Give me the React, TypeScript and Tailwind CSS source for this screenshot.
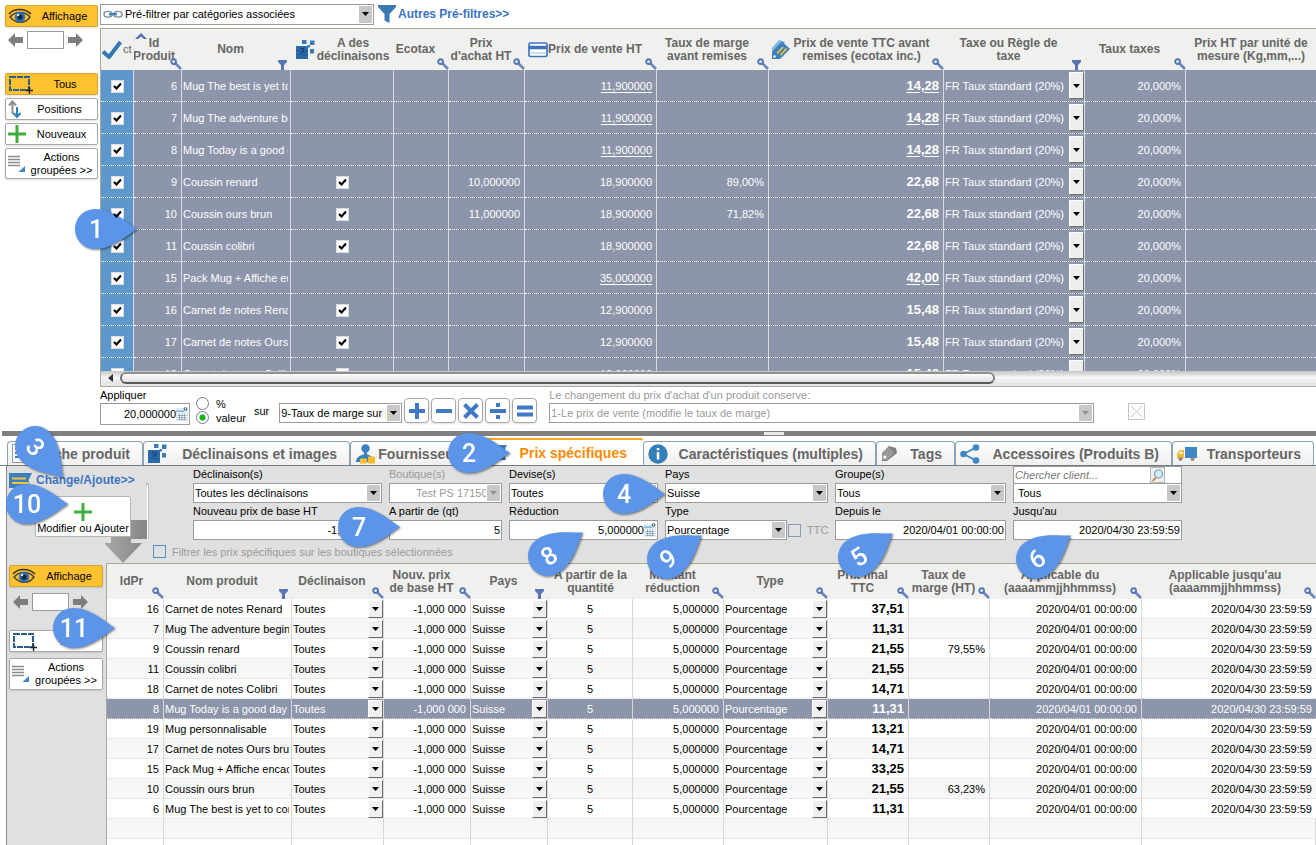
import type { ReactNode } from "react";

/* ---------- icons ---------- */

const EyeIcon = () => (
  <svg width="24" height="17" viewBox="0 0 24 17" fill="none" className="shrink-0">
    <path d="M1 6C6 0 17 0 23 6" stroke="#333" strokeWidth="1.6" />
    <path d="M2 9C7 3 17 3 22 9C17 16 8 16 2 9Z" stroke="#444" strokeWidth="1.4" />
    <circle cx="12" cy="9" r="5.2" fill="#2f6fae" />
    <circle cx="12" cy="9" r="2.6" fill="#10243c" />
    <circle cx="10" cy="7" r="1.3" fill="#cfe2f5" />
  </svg>
);

const ArrowIcon = ({ flip = false }: { flip?: boolean }) => (
  <svg width="15" height="14" viewBox="0 0 15 14" className="shrink-0">
    <path d={flip ? "M15 7L8 0V4H0V10H8V14Z" : "M0 7L7 0V4H15V10H7V14Z"} fill="#7d7d7d" />
  </svg>
);

const SelectionIcon = () => (
  <svg width="25" height="20" viewBox="0 0 25 20" fill="none" className="shrink-0">
    <rect x="2" y="3" width="19" height="13" stroke="#2b5f8a" strokeWidth="2" strokeDasharray="6 1" />
    <path d="M21.5 13V20M18 16.500H25" stroke="#222" strokeWidth="1.4" />
  </svg>
);

const PositionsIcon = () => (
  <svg width="14" height="19" viewBox="0 0 14 19" fill="none" className="shrink-0">
    <path d="M4.500 14V2M1 5.500L4.500 1.500L8 5.500" stroke="#8d8d8d" strokeWidth="2" />
    <path d="M9 7V17M5.500 13L9 17L12.500 13" stroke="#2f7fc1" strokeWidth="2" />
  </svg>
);

const PlusIcon = () => (
  <svg width="18" height="18" viewBox="0 0 18 18" className="shrink-0">
    <path d="M7.500 0H10.500V7.500H18V10.500H10.500V18H7.500V10.500H0V7.500H7.500Z" fill="#3eae3a" />
  </svg>
);

const ListIcon = () => (
  <svg width="18" height="18" viewBox="0 0 18 18" className="shrink-0">
    <path d="M0 1.500H12M0 4.500H12M0 7.500H12M0 10.500H12" stroke="#8d8d8d" strokeWidth="1.3" />
    <path d="M17 11V17H10.500Z" fill="#3c86c6" />
  </svg>
);

const LinkIcon = () => (
  <svg width="20" height="10" viewBox="0 0 20 10" fill="none" className="shrink-0">
    <rect x="1" y="2.500" width="8" height="5.500" rx="2.700" stroke="#8e9aa5" strokeWidth="1.700" />
    <rect x="11" y="2.500" width="8" height="5.500" rx="2.700" stroke="#8e9aa5" strokeWidth="1.700" />
    <path d="M6 5.200H14" stroke="#3a7fc0" strokeWidth="2.200" />
  </svg>
);

const Funnel = ({ size }: { size: number }) => (
  <svg width={size} height={size} viewBox="0 0 18 18" className="shrink-0">
    <path d="M0 0H18V2L11.500 9V18L6.500 15.500V9L0 2Z" fill="#3c78b4" />
  </svg>
);

const SmallFunnel = () => (
  <svg width="9" height="10" viewBox="0 0 9 10">
    <path d="M0 0H9V2L6 5V10H3V5L0 2Z" fill="#5676b4" />
  </svg>
);

const KeyIcon = () => (
  <svg width="12" height="12" viewBox="0 0 12 12" fill="none">
    <path d="M4.500 4.500L11 11" stroke="#6d87bd" strokeWidth="2.600" />
    <circle cx="3.600" cy="3.600" r="2.400" stroke="#5676b4" strokeWidth="1.900" fill="#e6ecf7" />
  </svg>
);

const BigCheck = () => (
  <svg width="22" height="20" viewBox="0 0 22 20" fill="none" className="shrink-0">
    <path d="M2 11.500L8 17L19.500 2" stroke="#3379b5" strokeWidth="4" strokeLinejoin="round" />
  </svg>
);

const Cubes = () => (
  <svg width="19" height="21" viewBox="0 0 19 21" className="shrink-0">
    <path d="M0 7H12V20H0Z" fill="#2c6cab" />
    <path d="M0 11.500H12M0 15.800H12M4 7V20M8 7V20" stroke="#1f5891" strokeWidth=".7" />
    <path d="M4 9.500H7.500V12.500H6V14.500" stroke="#173f6e" strokeWidth="1.100" fill="none" />
    <path d="M6 1H10.500V5H6ZM14 1.500H18.500V6H14ZM14 10H18V14.500H14ZM11.500 6H14V8.500H11.500Z" fill="#3b7ab8" />
  </svg>
);

const CardIcon = () => (
  <svg width="20" height="16" viewBox="0 0 20 16" fill="none" className="shrink-0">
    <rect x="1" y="1" width="18" height="13.500" rx="1.500" stroke="#3f73c0" strokeWidth="1.700" fill="#fff" />
    <path d="M1 5.500H19" stroke="#3f73c0" strokeWidth="3.500" />
    <path d="M1 11H19" stroke="#9cb8e2" strokeWidth="1" />
  </svg>
);

const PriceTagIcon = () => (
  <svg width="20" height="21" viewBox="0 0 20 21" className="shrink-0">
    <path d="M1 9L8 1L14 3L4 16H1Z" fill="#7db2dc" />
    <path d="M1 13L11 2.500L19 10L9 20H1Z" fill="#3b7fbd" />
    <path d="M6 14.500L12 8M9.500 16L15.500 9.500" stroke="#f5c33b" strokeWidth="1.800" />
    <circle cx="3.500" cy="17.500" r="1.200" fill="#fff" />
  </svg>
);

const SheetIcon = () => (
  <svg width="18" height="20" viewBox="0 0 18 20" className="shrink-0">
    <rect x=".5" y=".5" width="16" height="18" fill="#fff" stroke="#9a9a9a" />
    <path d="M3 5H14M3 9H14M3 13H14" stroke="#3f86c4" strokeWidth="2" />
  </svg>
);

const SupplierIcon = () => (
  <svg width="21" height="20" viewBox="0 0 21 20" className="shrink-0">
    <circle cx="10.500" cy="4.500" r="4.200" fill="#3b80bf" />
    <path d="M9 8H12V11H9Z" fill="#3b80bf" />
    <path d="M1 18C1 14 4 12 8 10.500H13C16 12 17 13 17 15V18Z" fill="#3b80bf" />
    <path d="M5 14.500H12V19.500H5ZM13 12.500H20V19.500H13Z" fill="#f2bd2e" />
  </svg>
);

const RibbonIcon = () => (
  <svg width="23" height="15" viewBox="0 0 23 15" className="shrink-0">
    <path d="M0 0H23L19.500 7L22 15H0Z" fill="#3b7fbd" />
    <path d="M3 5.500H17M3 10H20" stroke="#f5c33b" strokeWidth="2" />
  </svg>
);

const InfoIcon = () => (
  <svg width="20" height="20" viewBox="0 0 20 20" className="shrink-0">
    <circle cx="10" cy="10" r="9.700" fill="#357fb9" />
    <path d="M8.800 4H11.300V6.300H8.800ZM8.800 8H11.300V15.500H8.800Z" fill="#fff" />
  </svg>
);

const TagIcon = () => (
  <svg width="17" height="17" viewBox="0 0 17 17" className="shrink-0">
    <path d="M1 8L8 1L15 3L16 8L6 16H1Z" fill="#808080" />
    <path d="M1 9L8 2L13 8L6 15H1Z" fill="#9a9a9a" />
    <circle cx="3.800" cy="12" r="1.500" fill="#fff" />
  </svg>
);

const ShareIcon = () => (
  <svg width="20" height="20" viewBox="0 0 20 20" className="shrink-0">
    <path d="M16 3.500L3.500 10L16 16.500" stroke="#3f86c4" strokeWidth="1.800" fill="none" />
    <circle cx="16" cy="3.500" r="3.300" fill="#3f86c4" />
    <circle cx="3.500" cy="10" r="3.300" fill="#3f86c4" />
    <circle cx="16" cy="16.500" r="3.300" fill="#3f86c4" />
  </svg>
);

const TruckIcon = () => (
  <svg width="20" height="16" viewBox="0 0 20 16" className="shrink-0">
    <rect x="8" y="1" width="12" height="11" fill="#3f86c4" />
    <path d="M2.500 4H7V12.500H0V8Z" fill="#f2b93a" />
    <path d="M3 5.500H5.500V8H2Z" fill="#fff3cf" />
    <circle cx="3.500" cy="13" r="2" fill="#8a8a8a" />
    <circle cx="15.500" cy="13" r="2" fill="#8a8a8a" />
  </svg>
);

const CalcIcon = () => (
  <svg width="12" height="14" viewBox="0 0 12 14" className="shrink-0">
    <path d="M0 1H12V14H0Z" fill="#d9ecf8" />
    <path d="M0 3.500H8V5H0Z" fill="#7fb4d8" />
    <path d="M1.500 6.500H10.500V12.500H1.500Z" fill="#fff" />
    <path d="M1.500 8.500H10.500M1.500 10.500H10.500M1.500 12.500H10.500M3.500 6.500V12.500M6 6.500V12.500M8.500 6.500V12.500" stroke="#8a9aa6" strokeWidth=".8" />
    <circle cx="9.500" cy="2" r="1.400" fill="none" stroke="#333" strokeWidth=".8" />
  </svg>
);

const Triangle = ({ muted = false }: { muted?: boolean }) => (
  <svg width="7" height="4" viewBox="0 0 7 4">
    <path d="M0 0H7L3.500 4Z" fill={muted ? "#8e8e8e" : "#000"} />
  </svg>
);

/* ---------- controls ---------- */

function CheckBox({ label, off = false }: { label: string; off?: boolean }) {
  return (
    <span className="inline-grid size-[13px] align-middle">
      <input
        type="checkbox"
        aria-label={label}
        defaultChecked={!off}
        className="peer [grid-area:1/1] size-[13px] appearance-none border border-[#dcdcdc] bg-white"
      />
      <svg viewBox="0 0 13 13" className="pointer-events-none invisible z-[1] [grid-area:1/1] peer-checked:visible">
        <path d="M3 6L5.500 8.500L10 3.500" stroke="#000" strokeWidth="2.200" fill="none" />
      </svg>
    </span>
  );
}

type BoxProps = {
  id?: string;
  label?: string;
  value: string;
  className?: string;
  muted?: boolean;
  pad?: string;
};

function SelectBox({ id, label, value, className = "h-5 border", muted = false, pad = "pl-1" }: BoxProps) {
  return (
    <span className={`grid border-[#9b9b9b] bg-white ${className}`}>
      <select
        id={id}
        aria-label={label}
        disabled={muted}
        className={`w-full min-w-0 appearance-none overflow-hidden pr-[15px] opacity-100 outline-none [grid-area:1/1] ${pad} ${muted ? "text-[#9a9a9a]" : "text-black"}`}
      >
        <option>{value}</option>
      </select>
      <span className="pointer-events-none m-px flex w-[13px] items-center justify-center justify-self-end bg-[#c8c8c8] [grid-area:1/1]">
        <Triangle muted={muted} />
      </span>
    </span>
  );
}

function CellSelect({ label, value, tall = false }: { label: string; value: string; tall?: boolean }) {
  return (
    <span className="grid h-full">
      <select
        aria-label={label}
        className={`w-full min-w-0 appearance-none overflow-hidden bg-transparent pr-4 pl-px outline-none [grid-area:1/1] ${tall ? "pt-0.5" : ""}`}
      >
        <option className="text-black">{value}</option>
      </select>
      <span
        className={`pointer-events-none flex w-[15px] items-center justify-center justify-self-end border border-t-white border-r-[#6c6c6c] border-b-[#6c6c6c] border-l-white bg-[#efefef] [grid-area:1/1] ${tall ? "mt-0.5" : "mt-px"}`}
      >
        <Triangle />
      </span>
    </span>
  );
}

function TextBox({ id, label, value, className = "h-5", icon }: BoxProps & { icon?: ReactNode }) {
  return (
    <span className={`flex items-center border border-[#9b9b9b] bg-white pr-px ${className}`}>
      <input id={id} aria-label={label} defaultValue={value} className="w-full min-w-0 text-right outline-none" />
      {icon}
    </span>
  );
}

function SideButton({ icon, children, active = false, className = "h-[22px]" }: { icon: ReactNode; children: ReactNode; active?: boolean; className?: string }) {
  return (
    <button
      type="button"
      className={`flex w-full items-center rounded-xs border pl-0.5 shadow-sm ${className} ${active ? "border-[#d9a436] bg-[#ffc12e]" : "border-[#a8a8a8] bg-white"}`}
    >
      {icon}
      <span className="flex-1 text-center leading-[13px]">{children}</span>
    </button>
  );
}

function Pager({ label }: { label: string }) {
  return (
    <div className="flex h-[18px] items-center justify-center gap-1 pr-3">
      <button type="button" aria-label="Précédent">
        <ArrowIcon />
      </button>
      <input aria-label={label} className="h-[18px] w-[37px] border border-[#9b9b9b] bg-white" />
      <button type="button" aria-label="Suivant">
        <ArrowIcon flip />
      </button>
    </div>
  );
}

type Head = { text: ReactNode; name: string; w?: string; icon?: ReactNode; corner?: "key" | "filter"; pad?: string };

function HeadRow({ cols, className }: { cols: Head[]; className: string }) {
  return (
    <thead>
      <tr className={`bg-[#f0f0ee] ${className}`}>
        {cols.map((c) => (
          <th key={c.name} scope="col" className="relative overflow-hidden p-0 text-xs leading-[13px] font-bold whitespace-nowrap text-[#666]">
            <div className={`flex items-center ${c.pad ?? "justify-center"}`}>
              {c.icon}
              <span>{c.text}</span>
            </div>
            {c.corner === "key" && (
              <span className="absolute right-0 bottom-0">
                <KeyIcon />
              </span>
            )}
            {c.corner === "filter" && (
              <span className="absolute right-1 bottom-0">
                <SmallFunnel />
              </span>
            )}
          </th>
        ))}
      </tr>
    </thead>
  );
}

/* ---------- products grid ---------- */

const productCols: Head[] = [
  { name: "act", w: "w-[33px]", text: "ct", icon: <BigCheck />, pad: "justify-start font-normal text-[11px]" },
  {
    name: "id",
    w: "w-[48px]",
    corner: "key",
    text: (
      <>
        <svg width="12" height="6" viewBox="0 0 12 6" className="absolute top-1 left-px">
          <path d="M0 6L6 0L12 6L9 6L6 3.500L3 6Z" fill="#4e6fb0" />
        </svg>
        Id
        <br />
        Produit
      </>
    ),
    pad: "justify-center pr-2",
  },
  { name: "nom", w: "w-[109px]", corner: "filter", text: "Nom", pad: "justify-center pr-3" },
  { name: "decl", w: "w-[103px]", icon: <Cubes />, text: <>A des<br />déclinaisons</>, pad: "justify-center gap-0.5" },
  { name: "eco", w: "w-[55px]", corner: "key", text: "Ecotax", pad: "justify-center pr-3" },
  { name: "achat", w: "w-[76px]", corner: "key", text: <>Prix<br />d'achat HT</>, pad: "justify-center pr-3" },
  { name: "ht", w: "w-[132px]", corner: "key", icon: <CardIcon />, text: "Prix de vente HT", pad: "justify-center pr-3" },
  { name: "marge", w: "w-[112px]", corner: "key", text: <>Taux de marge<br />avant remises</>, pad: "justify-center pr-3" },
  { name: "ttc", w: "w-[175px]", corner: "key", icon: <PriceTagIcon />, text: <>Prix de vente TTC avant<br />remises (ecotax inc.)</>, pad: "justify-center gap-0.5 pr-3" },
  { name: "taxe", w: "w-[141px]", corner: "filter", text: <>Taxe ou Règle de<br />taxe</>, pad: "justify-center pr-3" },
  { name: "taux", w: "w-[101px]", corner: "key", text: "Taux taxes", pad: "justify-center pr-3" },
  { name: "unite", text: <>Prix HT par unité de<br />mesure (Kg,mm,...)</> },
];

type Product = { id: number; nom: string; decl?: boolean; achat?: string; ht: string; marge?: string; ttc: string; link?: boolean };

const products: Product[] = [
  { id: 6, nom: "Mug The best is yet to come", ht: "11,900000", ttc: "14,28", link: true },
  { id: 7, nom: "Mug The adventure begins", ht: "11,900000", ttc: "14,28", link: true },
  { id: 8, nom: "Mug Today is a good day", ht: "11,900000", ttc: "14,28", link: true },
  { id: 9, nom: "Coussin renard", decl: true, achat: "10,000000", ht: "18,900000", marge: "89,00%", ttc: "22,68" },
  { id: 10, nom: "Coussin ours brun", decl: true, achat: "11,000000", ht: "18,900000", marge: "71,82%", ttc: "22,68" },
  { id: 11, nom: "Coussin colibri", decl: true, ht: "18,900000", ttc: "22,68" },
  { id: 15, nom: "Pack Mug + Affiche encadrée", ht: "35,000000", ttc: "42,00", link: true },
  { id: 16, nom: "Carnet de notes Renard", decl: true, ht: "12,900000", ttc: "15,48" },
  { id: 17, nom: "Carnet de notes Ours brun", decl: true, ht: "12,900000", ttc: "15,48" },
  { id: 18, nom: "Carnet de notes Colibri", decl: true, ht: "12,900000", ttc: "15,48" },
];

const pCell = "border-r border-b border-r-[#d8dbe2] border-b-white border-dotted [border-right-style:solid] p-0 overflow-hidden whitespace-nowrap";

function ProductsGrid() {
  return (
    <div className="h-[343px] overflow-hidden border-t border-l border-[#aca899] bg-[#8d95aa]">
      <table className="w-full table-fixed border-separate border-spacing-0 text-white">
        <colgroup>
          {productCols.map((c) => (
            <col key={c.name} className={c.w} />
          ))}
        </colgroup>
        <HeadRow cols={productCols} className="h-[41px]" />
        <tbody>
          {products.map((p) => (
            <tr key={p.id} className="h-8">
              <td className={`${pCell} bg-[#5e97cb] text-center`}>
                <CheckBox label={`Sélectionner ${p.nom}`} />
              </td>
              <td className={`${pCell} pr-1 text-right`}>{p.id}</td>
              <td className={`${pCell} pr-0.5 pl-px`}>
                <div className="overflow-hidden">{p.nom}</div>
              </td>
              <td className={`${pCell} text-center`}>{p.decl && <CheckBox label={`Déclinaisons ${p.nom}`} />}</td>
              <td className={pCell} />
              <td className={`${pCell} pr-1 text-right`}>{p.achat}</td>
              <td className={`${pCell} pr-1 text-right`}>
                <span className={p.link ? "underline underline-offset-2" : ""}>{p.ht}</span>
              </td>
              <td className={`${pCell} pr-1 text-right`}>{p.marge}</td>
              <td className={`${pCell} pr-1 text-right text-[13px] font-bold`}>
                <span className={p.link ? "underline underline-offset-2" : ""}>{p.ttc}</span>
              </td>
              <td className={`${pCell} h-8`}>
                <div className="h-[31px] pb-0.5">
                  <CellSelect label={`Taxe ${p.nom}`} value="FR Taux standard (20%)" tall />
                </div>
              </td>
              <td className={`${pCell} pr-1 text-right`}>20,000%</td>
              <td className={`${pCell} border-r-0`} />
            </tr>
          ))}
        </tbody>
      </table>
    </div>
  );
}

function ScrollTrack() {
  return (
    <div className="h-4 border-b border-l border-[#aca899] bg-[#e8e8e8]">
      <div className="flex h-[13px] items-center bg-linear-to-b from-[#c4c4c4] via-[#f6f6f6] to-[#e4e4e4]">
        <button type="button" aria-label="Défiler à gauche" className="flex w-[19px] items-center justify-center">
          <svg width="5" height="8" viewBox="0 0 5 8">
            <path d="M5 0V8L0 4Z" fill="#333" />
          </svg>
        </button>
        <div className="h-3 w-[72%] rounded-full border-2 border-t-[#909090] border-r-[#808080] border-b-[#5a5a5a] border-l-[#707070] bg-linear-to-b from-white to-[#dedede]" />
      </div>
    </div>
  );
}

function OpButton({ label, path }: { label: string; path: string }) {
  return (
    <button
      type="button"
      aria-label={label}
      className="flex size-[25px] items-center justify-center rounded-sm border border-[#a8a8a8] bg-white shadow-sm"
    >
      <svg width="18" height="18" viewBox="0 0 18 18">
        <path d={path} stroke="#3f78c4" strokeWidth="4" fill="none" />
      </svg>
    </button>
  );
}

function ApplyBar() {
  return (
    <div className="flex h-11 items-start">
      <div className="flex flex-col">
        <label htmlFor="apply" className="h-4 leading-[17px]">
          Appliquer
        </label>
        <TextBox id="apply" value="20,000000" className="h-[22px] w-[90px]" icon={<CalcIcon />} />
      </div>
      <fieldset className="ml-1.5 flex flex-col gap-px pt-2.5">
        {["%", "valeur"].map((v, i) => (
          <label key={v} className="flex h-[13px] items-center gap-[7px]">
            <input
              type="radio"
              name="mode"
              defaultChecked={i === 1}
              className="size-[13px] appearance-none rounded-full border border-[#6f7d90] bg-white checked:bg-radial checked:from-[#12b512] checked:from-35% checked:to-white checked:to-45%"
            />
            {v}
          </label>
        ))}
      </fieldset>
      <label htmlFor="target" className="ml-2 pt-[17px]">
        sur
      </label>
      <SelectBox id="target" value="9-Taux de marge sur prix" className="mt-4 ml-2.5 h-5 w-[123px] border" pad="pl-px" />
      <div className="mt-[11px] ml-0.5 flex gap-0.5">
        <OpButton label="Ajouter" path="M9 1V17M1 9H17" />
        <OpButton label="Soustraire" path="M1 9H17" />
        <OpButton label="Multiplier" path="M2.500 2.500L15.500 15.500M15.500 2.500L2.500 15.500" />
        <OpButton label="Diviser" path="M1 9H17M7 3H11M7 15H11" />
        <OpButton label="Égal" path="M1 5.500H17M1 12.500H17" />
      </div>
      <div className="ml-3 flex flex-col text-[#9a9a9a]">
        <label htmlFor="keep" className="h-4 leading-[17px]">
          Le changement du prix d'achat d'un produit conserve:
        </label>
        <SelectBox id="keep" value="1-Le prix de vente (modifie le taux de marge)" className="h-5 w-[545px] border" muted pad="pl-px" />
      </div>
      <button type="button" aria-label="Effacer" disabled className="mt-4 ml-[34px]">
        <svg width="17" height="17" viewBox="0 0 17 17">
          <path d="M.5 .5H16.500V16.500H.5ZM3 3L14 14M14 3L3 14" fill="#fff" stroke="#c4c4c4" />
        </svg>
      </button>
    </div>
  );
}

/* ---------- tabs ---------- */

const tabs: { name: string; w: string; icon: ReactNode; active?: boolean }[] = [
  { name: "Fiche produit", w: "w-[136px]", icon: <SheetIcon /> },
  { name: "Déclinaisons et images", w: "w-[207px]", icon: <Cubes /> },
  { name: "Fournisseurs", w: "w-[130px]", icon: <SupplierIcon /> },
  { name: "Prix spécifiques", w: "w-[163px]", icon: <RibbonIcon />, active: true },
  { name: "Caractéristiques (multiples)", w: "w-[233px]", icon: <InfoIcon /> },
  { name: "Tags", w: "w-[79px]", icon: <TagIcon /> },
  { name: "Accessoires (Produits B)", w: "w-[217px]", icon: <ShareIcon /> },
  { name: "Transporteurs", w: "w-[142px]", icon: <TruckIcon /> },
];

function TabBar() {
  return (
    <nav className="flex h-7 items-end overflow-hidden border-b border-[#6f7d86] pl-[7px] text-[14px] font-bold">
      {tabs.map((t) => (
        <a
          key={t.name}
          href={`#${t.name}`}
          className={`flex shrink-0 items-center justify-between pl-1 whitespace-nowrap ${t.w} ${
            t.active
              ? "h-7 rounded-t-sm border-t-[3px] border-[#ffa521] bg-white pr-4 text-[#ff8a00]"
              : "h-6 rounded-t-sm border border-b-0 border-[#8ba3b5] bg-linear-to-b from-white to-[#efefef] pr-3 text-[#666]"
          }`}
        >
          {t.icon}
          {t.name}
        </a>
      ))}
    </nav>
  );
}

/* ---------- specific prices ---------- */

const priceCols: Head[] = [
  { name: "id", w: "w-[57px]", corner: "key", text: "IdPr", pad: "justify-center pr-2" },
  { name: "nom", w: "w-[128px]", corner: "filter", text: "Nom produit", pad: "justify-center pr-3" },
  { name: "decl", w: "w-[92px]", corner: "key", text: "Déclinaison", pad: "justify-center pr-3" },
  { name: "base", w: "w-[87px]", corner: "key", text: <>Nouv. prix<br />de base HT</>, pad: "justify-center pr-3" },
  { name: "pays", w: "w-[77px]", corner: "filter", text: "Pays", pad: "justify-center pr-3" },
  { name: "qte", w: "w-[85px]", text: <>A partir de la<br />quantité</> },
  { name: "red", w: "w-[91px]", corner: "key", text: <>Montant<br />réduction</>, pad: "justify-center pr-3" },
  { name: "type", w: "w-[104px]", corner: "key", text: "Type", pad: "justify-center pr-3" },
  { name: "final", w: "w-[81px]", corner: "key", text: <>Prix final<br />TTC</>, pad: "justify-center pr-3" },
  { name: "marge", w: "w-[81px]", corner: "key", text: <>Taux de<br />marge (HT)</>, pad: "justify-center pr-3" },
  { name: "du", w: "w-[152px]", corner: "key", text: <>Applicable du<br />(aaaammjjhhmmss)</>, pad: "justify-center pr-3" },
  { name: "au", corner: "key", text: <>Applicable jusqu'au<br />(aaaammjjhhmmss)</>, pad: "justify-center pr-2" },
];

const prices: { id: number; nom: string; total: string; marge?: string }[] = [
  { id: 16, nom: "Carnet de notes Renard", total: "37,51" },
  { id: 7, nom: "Mug The adventure begins", total: "11,31" },
  { id: 9, nom: "Coussin renard", total: "21,55", marge: "79,55%" },
  { id: 11, nom: "Coussin colibri", total: "21,55" },
  { id: 18, nom: "Carnet de notes Colibri", total: "14,71" },
  { id: 8, nom: "Mug Today is a good day", total: "11,31" },
  { id: 19, nom: "Mug personnalisable", total: "13,21" },
  { id: 17, nom: "Carnet de notes Ours brun", total: "14,71" },
  { id: 15, nom: "Pack Mug + Affiche encadrée", total: "33,25" },
  { id: 10, nom: "Coussin ours brun", total: "21,55", marge: "63,23%" },
  { id: 6, nom: "Mug The best is yet to come", total: "11,31" },
];

const sCell = "border-r border-b border-[#d8d8d8] border-dotted [border-right-style:solid] p-0 overflow-hidden whitespace-nowrap";

function PricesGrid() {
  return (
    <div className="min-w-0 flex-1 overflow-hidden border-t border-l border-[#aca899] bg-white">
      <table className="w-full table-fixed border-separate border-spacing-0">
        <colgroup>
          {priceCols.map((c) => (
            <col key={c.name} className={c.w} />
          ))}
        </colgroup>
        <HeadRow cols={priceCols} className="h-[35px]" />
        <tbody>
          {prices.map((p, i) => (
            <tr key={p.id} className={`h-5 ${p.id === 8 ? "bg-[#8d95aa] text-white" : i % 2 ? "bg-[#f7f7f7]" : ""}`}>
              <td className={`${sCell} pr-1 text-right`}>{p.id}</td>
              <td className={`${sCell} pr-0.5 pl-px`}>
                <div className="overflow-hidden">{p.nom}</div>
              </td>
              <td className={sCell}>
                <div className="h-[19px]">
                  <CellSelect label="Déclinaison" value="Toutes" />
                </div>
              </td>
              <td className={`${sCell} pr-1 text-right`}>-1,000 000</td>
              <td className={sCell}>
                <div className="h-[19px]">
                  <CellSelect label="Pays" value="Suisse" />
                </div>
              </td>
              <td className={`${sCell} text-center`}>5</td>
              <td className={`${sCell} pr-1 text-right`}>5,000000</td>
              <td className={sCell}>
                <div className="h-[19px]">
                  <CellSelect label="Type" value="Pourcentage" />
                </div>
              </td>
              <td className={`${sCell} pr-1 text-right text-[13px] font-bold`}>{p.total}</td>
              <td className={`${sCell} pr-1 text-right`}>{p.marge}</td>
              <td className={`${sCell} pr-1 text-right`}>2020/04/01 00:00:00</td>
              <td className={`${sCell} border-r-0 pr-1 text-right`}>2020/04/30 23:59:59</td>
            </tr>
          ))}
          {[0, 1].map((r) => (
            <tr key={r} className={`h-5 ${r === 0 ? "bg-[#f7f7f7]" : ""}`}>
              {priceCols.map((c) => (
                <td key={c.name} className={sCell} />
              ))}
            </tr>
          ))}
        </tbody>
      </table>
    </div>
  );
}

function Field({ id, label, children, muted = false }: { id: string; label: string; children: ReactNode; muted?: boolean }) {
  return (
    <div className="flex flex-col">
      <label htmlFor={id} className={`h-[17px] leading-[17px] ${muted ? "text-[#9a9a9a]" : ""}`}>
        {label}
      </label>
      {children}
    </div>
  );
}

function PriceForm() {
  return (
    <div className="flex flex-col">
      <div className="grid grid-cols-[189px_113px_149px_163px_171px_169px] gap-x-[7px] pl-10">
        <Field id="f-decl" label="Déclinaison(s)">
          <SelectBox id="f-decl" value="Toutes les déclinaisons" pad="pl-px" />
        </Field>
        <Field id="f-shop" label="Boutique(s)" muted>
          <SelectBox id="f-shop" value="Test PS 17150" muted pad="pl-[26px]" />
        </Field>
        <Field id="f-dev" label="Devise(s)">
          <SelectBox id="f-dev" value="Toutes" pad="pl-px" />
        </Field>
        <Field id="f-pays" label="Pays">
          <SelectBox id="f-pays" value="Suisse" pad="pl-px" />
        </Field>
        <Field id="f-grp" label="Groupe(s)">
          <SelectBox id="f-grp" value="Tous" pad="pl-px" />
        </Field>
        <div className="flex flex-col">
          <div className="flex h-[17px] items-center border border-b-0 border-[#9b9b9b] bg-white pr-4">
            <input aria-label="Chercher client" placeholder="Chercher client..." className="w-full min-w-0 pl-px italic outline-none placeholder:text-[#777]" />
            <button type="button" aria-label="Chercher" className="flex h-4 w-4 items-center justify-center border border-[#b8b8b8] bg-[#eee]">
              <svg width="13" height="13" viewBox="0 0 13 13">
                <path d="M5.500 8L1.500 12" stroke="#c09560" strokeWidth="2" />
                <circle cx="7.500" cy="5" r="4" fill="#d4ecfa" stroke="#7f9fb4" strokeWidth="1.200" />
              </svg>
            </button>
          </div>
          <SelectBox label="Client" value="Tous" />
        </div>
        <Field id="f-base" label="Nouveau prix de base HT">
          <TextBox id="f-base" value="-1,000 000" />
        </Field>
        <Field id="f-qt" label="A partir de (qt)">
          <TextBox id="f-qt" value="5" />
        </Field>
        <Field id="f-red" label="Réduction">
          <TextBox id="f-red" value="5,000000" icon={<CalcIcon />} />
        </Field>
        <div className="flex items-end">
          <Field id="f-type" label="Type">
            <SelectBox id="f-type" value="Pourcentage" className="h-5 w-[122px] border" pad="pl-px" />
          </Field>
          <label className="flex h-5 items-center gap-1.5 pl-px text-[#9a9a9a]">
            <input type="checkbox" className="size-[13px] appearance-none border border-[#8a9ab8]" />
            TTC
          </label>
        </div>
        <Field id="f-from" label="Depuis le">
          <TextBox id="f-from" value="2020/04/01 00:00:00" />
        </Field>
        <Field id="f-to" label="Jusqu'au">
          <TextBox id="f-to" value="2020/04/30 23:59:59" />
        </Field>
      </div>
      <label className="flex h-[23px] items-center gap-1.5 text-[#9a9a9a]">
        <input type="checkbox" className="size-[13px] appearance-none border border-[#4f8fcb]" />
        Filtrer les prix spécifiques sur les boutiques sélectionnées
      </label>
    </div>
  );
}

function PricePanel() {
  return (
    <section className="ml-1.5 flex flex-1 flex-col border-l border-[#8a8a8a] bg-[#e0e0e0]">
      <div className="flex h-[97px]">
        <div className="relative w-[146px] shrink-0 pt-1.5 pl-[2px]">
          <svg width="44" height="82" viewBox="0 0 44 82" className="absolute top-4 left-[98px]">
            <defs>
              <linearGradient id="flow" x1="0" y1="0" x2="1" y2="0">
                <stop offset="0" stopColor="#a8a8a8" />
                <stop offset="1" stopColor="#868686" />
              </linearGradient>
            </defs>
            <path d="M6 38H42V57H26V61H37L18 81L-1 61H6Z" fill="url(#flow)" />
            <path d="M41 2H43V57" stroke="#999" fill="none" />
            <path d="M42.500 3V57" stroke="#fff" fill="none" />
          </svg>
          <a href="#change" className="flex items-center gap-1 text-xs font-bold text-[#3b74c4]">
            <RibbonIcon />
            Change/Ajoute&gt;&gt;
          </a>
          <button
            type="button"
            className="relative mt-2 ml-[26px] flex h-[41px] w-24 flex-col items-center justify-end rounded-xs border border-[#b4b4b4] bg-white leading-[15px] whitespace-nowrap"
          >
            <PlusIcon />
            Modifier ou Ajouter
          </button>
        </div>
        <PriceForm />
      </div>
      <div className="flex flex-1">
        <aside className="flex w-[99px] shrink-0 flex-col pt-0.5 pr-[3px] pl-[2px]">
          <SideButton active icon={<EyeIcon />}>
            Affichage
          </SideButton>
          <div className="mt-1.5">
            <Pager label="Page prix" />
          </div>
          <div className="mt-[19px] flex flex-col gap-1.5">
            <SideButton icon={<SelectionIcon />}>Tous</SideButton>
            <SideButton className="h-8" icon={<ListIcon />}>
              Actions
              <br />
              groupées &gt;&gt;
            </SideButton>
          </div>
        </aside>
        <PricesGrid />
      </div>
    </section>
  );
}

/* ---------- numbered markers ---------- */

const markers = [
  { n: 1, x: 95, y: 229, a: 0 },
  { n: 2, x: 468, y: 453, a: 0 },
  { n: 3, x: 35, y: 446, a: 48 },
  { n: 4, x: 623, y: 494, a: 0 },
  { n: 5, x: 858, y: 557, a: -34 },
  { n: 6, x: 1036, y: 559, a: -34 },
  { n: 7, x: 358, y: 527, a: 0 },
  { n: 8, x: 548, y: 556, a: -34 },
  { n: 9, x: 667, y: 559, a: -34 },
  { n: 10, x: 26, y: 504, a: 0 },
  { n: 11, x: 73, y: 628, a: 0 },
];

function Markers() {
  return (
    <>
      {markers.map((m) => (
        <svg
          key={m.n}
          width="100"
          height="100"
          viewBox="-50 -50 100 100"
          className="pointer-events-none absolute drop-shadow-[1px_1px_1px_rgba(0,0,0,0.5)]"
          style={{ left: m.x - 50, top: m.y - 50 }}
        >
          <g transform={`rotate(${m.a})`}>
            <path d="M42 0C32 -6 18 -20 0 -20A20 20 0 0 0 0 20C18 20 32 6 42 0Z" fill="#5c95e8" />
            <text x="1" y="9" textAnchor="middle" fill="#fff" className="font-[Roboto] text-[25px] font-medium">
              {m.n}
            </text>
          </g>
        </svg>
      ))}
    </>
  );
}

export default function App() {
  return (
    <div className="relative flex h-screen min-h-[600px] flex-col overflow-hidden bg-white font-['Liberation_Sans',Arial,sans-serif] text-[11px] leading-[14px] text-black">
      <div className="flex">
        <aside className="flex w-[100px] shrink-0 flex-col pt-[5px] pr-0.5 pl-[5px]">
          <SideButton active icon={<EyeIcon />}>
            Affichage
          </SideButton>
          <div className="mt-1">
            <Pager label="Page produits" />
          </div>
          <div className="mt-6 flex flex-col gap-[3px]">
            <SideButton active icon={<SelectionIcon />}>
              Tous
            </SideButton>
            <SideButton icon={<PositionsIcon />}>Positions</SideButton>
            <SideButton icon={<PlusIcon />}>Nouveaux</SideButton>
            <SideButton className="h-[31px]" icon={<ListIcon />}>
              Actions
              <br />
              groupées &gt;&gt;
            </SideButton>
          </div>
        </aside>
        <main className="min-w-0 flex-1">
          <div className="flex h-7 items-center">
            <div className="flex h-[21px] w-[274px] items-center border border-[#9b9b9b] bg-white pl-0.5">
              <LinkIcon />
              <SelectBox label="Pré-filtre" value="Pré-filtrer par catégories associées" className="h-[19px] flex-1" pad="pl-0.5" />
            </div>
            <a href="#filters" className="ml-1 flex items-center gap-0.5 text-xs font-bold text-[#3b74c4]">
              <Funnel size={18} />
              Autres Pré-filtres&gt;&gt;
            </a>
          </div>
          <ProductsGrid />
          <ScrollTrack />
          <ApplyBar />
        </main>
      </div>
      <div className="ml-0.5 flex h-[5px] shrink-0 items-center justify-center bg-[#808080] pl-[230px]">
        <div className="h-[3px] w-5 bg-[#e8e8e8]" />
      </div>
      <div className="mt-0.5 shrink-0">
        <TabBar />
      </div>
      <PricePanel />
      <Markers />
    </div>
  );
}
